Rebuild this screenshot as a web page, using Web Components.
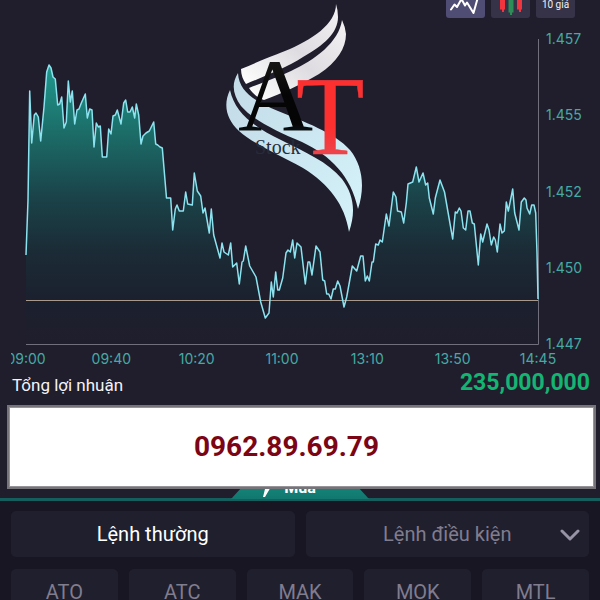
<!DOCTYPE html>
<html lang="vi">
<head>
<meta charset="utf-8">
<meta name="viewport" content="width=device-width, initial-scale=1">
<title>AT Stock</title>
<style>
  html, body { margin: 0; height: 100%; background: #201e2d; }
  body { overflow: hidden; font-family: Roboto, "Noto Sans", sans-serif; color: #f4f4f8; }
</style>
</head>
<body>
<trading-screen></trading-screen>
<script>
const define = (name, html, setup) => customElements.define(name, class extends HTMLElement {
  constructor() {
    super();
    const t = document.createElement('template');
    t.innerHTML = html;
    this.attachShadow({ mode: 'open' }).append(t.content.cloneNode(true));
  }
  connectedCallback() { if (setup) setup(this, this.shadowRoot); }
});

define('tool-button', `
  <style>
    :host { display: block; width: 39px; }
    button { display: flex; align-items: center; justify-content: center; width: 100%; height: 26px; padding: 0; border: 0; border-radius: 3px; background: #363348; color: #f0f0f5; font: 10px/12px Roboto, sans-serif; }
    :host([active]) button { background: #504d74; }
  </style>
  <button type="button"><slot></slot></button>`,
  (el, root) => { const l = el.getAttribute('label'); if (l) root.querySelector('button').setAttribute('aria-label', l); });

define('chart-toolbar', `
  <style>
    :host { display: flex; justify-content: flex-end; align-items: flex-end; gap: 6px; height: 18px; padding-right: 25px; overflow: hidden; }
    svg { display: block; }
  </style>
  <tool-button active label="Biểu đồ đường"><svg width="39" height="26" viewBox="0 -8 39 26" fill="none" stroke="#fff" stroke-width="2" stroke-linecap="round" stroke-linejoin="round"><path d="M5 9.500L8.500 4.500L11 7L15.500-1L19 5.500L21 2.500L27.500 13L32-3"/></svg></tool-button>
  <tool-button label="Biểu đồ nến"><svg width="39" height="26" viewBox="0 -8 39 26"><path fill="#f1353f" d="M9-5h5V9.500h-1V12h-2V9.500H9zM26-5h5V9.500h-1V12h-2V9.500h-2z"/><path fill="#2c8d57" d="M17.500 0h5v12.500h-1.500V15h-2v-2.500h-1.500z"/></svg></tool-button>
  <tool-button>10 giá</tool-button>`);

const PRICE_LINE = '26,255 28,200 29.700,91 31.700,143 34.300,115 36,113 38.300,117 40.700,141 44,107 46.700,72 49,65 51,68 53,77 55.300,79 57.700,105 59.700,104 61.700,97 64,128 66.300,122 68.300,81 70.300,102 72.300,91 74.700,124 77,110 79,109 81.300,103 85.300,94 87.300,118 89.700,109 92,110 94,147 96.300,123 98.300,127 100.300,126 102.300,157 106.700,157 108.700,129 111,134 113,116 115.300,115 117.300,110 121,124 123.700,103 125.700,100 127.700,112 130,112 132.300,107 134.700,118 136.300,104 138.700,115 141,144 143,136 146,133 149.300,131 153.700,122 155.700,144 157.700,145 160,147 162.300,148 166.500,198 170.700,198 172.700,230 175.300,209 177,205 179.300,211 183.300,211 185.700,192 187.700,204 192.300,205 194.300,173 197.300,191 200.700,196 203,213 205,208 209.300,233 211.300,209 213.700,235 220,258 222,243 224,252 228.300,255 230.700,243 232.700,267 236.700,263 239.300,284 242,262 243.300,261 245.700,246 249.700,266 256,277 260.700,302 265.300,318 269,313 271.300,282 273.300,297 275.700,272 277.700,290 279.300,290 282.700,278 286,253 288,250 290.300,252 292.700,240 294.700,258 297,243 301,247 305.300,284 308,262 309.700,262 312,275 316,246 320,252 322.700,280 324.700,281 326.700,294 328.700,294 331,299 333.300,289 335.300,289 337.700,281 340,286 344,307 346.700,297 352.300,266 356.700,271 360.700,256 363,256 365.300,281 367.300,276 369.300,281 372,262 373.300,262 375.700,244 378.300,245 380,240 382.300,242 386.300,214 389,226 393.300,192 396,197 397.500,211 401.300,212 403.700,223 406.300,203 408,184 412.700,182 416.300,167 419,182 423,173 425.700,185 427.700,183 429.300,198 433.300,214 435.300,198 440,180 444.500,192 452.700,239 455.300,212 457,213 459.300,208 461,211 463.300,228 465.700,230 468,211 470,211 472.300,223 474.300,224 478.300,265 480.700,234 482.700,242 487,224 489,230 491.300,245 493.700,237 495.300,240 497.300,252 500,224 502,233 504.300,231 506.300,202 508.300,211 512.700,189 514.700,213 519,230 521.300,202 524.300,198 526,200 527,208 529.700,214 531.700,205 534,205 535.700,213 537,253 538,299';

define('price-chart', `
  <style>
    :host { display: grid; grid-template-columns: 1fr 62px; padding-top: 21px; font: 14px/16px Inter, sans-serif; color: #45aaa4; }
    .plot { display: block; width: calc(100% - 26px); height: 305px; margin-left: 26px; overflow: visible; }
    .prices { display: flex; flex-direction: column; justify-content: space-between; padding-left: 8px; }
    .prices span { display: flex; align-items: center; height: 0; }
    .times { grid-column: 1 / -1; display: flex; justify-content: space-between; margin: 7px 0 0 11px; padding: 0 62px 0 15px; overflow: hidden; }
    .times span { display: flex; justify-content: center; width: 0; }
  </style>
  <svg class="plot" viewBox="26 39 512 305" preserveAspectRatio="none" role="img" aria-label="Biểu đồ giá">
    <defs><linearGradient id="area" gradientUnits="userSpaceOnUse" x1="0" y1="65" x2="0" y2="344">
      <stop offset="0" stop-color="#20998e"/><stop offset=".24" stop-color="#1c6d69"/><stop offset=".48" stop-color="#1a4248"/><stop offset=".66" stop-color="#1b2c37"/><stop offset=".85" stop-color="#1b202e"/><stop offset="1" stop-color="#201e2d"/>
    </linearGradient></defs>
    <polygon fill="url(#area)" points="26,344 ${PRICE_LINE} 538,344"/>
    <g fill="none">
      <path d="M26 344.500H538.500V39" stroke="#716f7b"/>
      <path d="M26 300.500H538" stroke="#a8998c"/>
      <polyline points="${PRICE_LINE}" stroke="#8be3ef" stroke-width="1.500" stroke-linejoin="round"/>
    </g>
  </svg>
  <div class="prices"><span>1.457</span><span>1.455</span><span>1.452</span><span>1.450</span><span>1.447</span></div>
  <div class="times"><span>09:00</span><span>09:40</span><span>10:20</span><span>11:00</span><span>13:10</span><span>13:50</span><span>14:45</span></div>`);

define('brand-logo', `
  <style>:host { display: block; } svg { display: block; width: 100%; } text { font-family: "Liberation Serif", serif; }</style>
  <svg viewBox="220 0 150 240">
    <defs>
      <linearGradient id="silver" x1="0" y1="1" x2="1" y2="0"><stop offset="0" stop-color="#fff"/><stop offset=".5" stop-color="#dedce0"/><stop offset="1" stop-color="#f4f2f4"/></linearGradient>
      <linearGradient id="ice" x1="0" y1="0" x2="1" y2="1"><stop offset="0" stop-color="#c3dbe7"/><stop offset="1" stop-color="#d4f2fa"/></linearGradient>
      <linearGradient id="ink" x1="0" y1="0" x2="0" y2="1"><stop offset="0" stop-color="#222320"/><stop offset=".5" stop-color="#050505"/><stop offset=".75" stop-color="#050505"/><stop offset="1" stop-color="#16333f"/></linearGradient>
      <linearGradient id="red" x1="0" y1="0" x2="0" y2="1"><stop offset=".6" stop-color="#fd3030"/><stop offset="1" stop-color="#dc5867"/></linearGradient>
    </defs>
    <path fill="url(#silver)" d="M336 4C336 24 312 40 285 51C267 58 255 63 241 69C241 75 243 80 246 84C265 76 286 68 303 57C324 45 338 33 338 17Q338 10 336 4Z"/>
    <path fill="url(#silver)" d="M342 20C339 42 315 60 291 71C278 77 262 83 249 88C253 94 258 98 264 100C281 94 302 84 319 74C337 62 346 48 346 34Q345 26 342 20Z"/>
    <path fill="url(#ice)" d="M238 73C231 84 233 95 241 106C253 120 276 131 302 142C331 156 351 176 358 209C365 188 363 166 350 150C334 132 304 122 278 111C257 102 239 93 238 73Z"/>
    <path fill="url(#ice)" d="M230 90C223 104 226 119 239 131C255 145 280 155 303 168C329 184 345 205 349 232C356 212 354 195 342 179C328 162 305 152 281 140C254 127 235 113 230 90Z"/>
    <text x="238" y="131" font-size="104" fill="url(#ink)">A</text>
    <text x="296" y="154" font-size="112" fill="url(#red)" stroke="#f23a40" stroke-width=".5">T</text>
    <text x="255" y="154" font-size="20" fill="#262d3b">Stock</text>
  </svg>`);

define('profit-row', `
  <style>
    :host { display: flex; justify-content: space-between; align-items: center; height: 31px; padding: 0 10px 0 12px; }
    span { font-size: 17px; line-height: 20px; margin-top: 4px; }
    strong { font-size: 23px; line-height: 28px; color: #14b573; }
  </style>
  <span>Tổng lợi nhuận</span><strong><slot></slot></strong>`);

define('contact-banner', `
  <style>
    :host { position: relative; z-index: 1; display: block; box-sizing: border-box; height: 84px; margin: 7px 4px 0 7px; padding-right: 30px; border: 2px solid #767379; outline: 1px solid #969399; outline-offset: -3px; background: #fff; color: #7b0514; font-size: 28px; font-weight: 700; line-height: 80px; text-align: center; }
  </style><slot></slot>`);

define('order-tab', `
  <style>
    :host { display: flex; justify-content: center; margin-top: -16px; border-bottom: 3px solid #145f5e; }
    button { display: flex; align-items: center; justify-content: center; gap: 12px; box-sizing: border-box; width: 138px; height: 26px; margin-bottom: -1px; padding: 4px 22px 0 0; border: 0; clip-path: polygon(24px 0, 114px 0, 100% 100%, 0 100%); background: linear-gradient(#159384, #12776f); color: #fff; font: 700 16px/20px Roboto, sans-serif; }
  </style>
  <button type="button"><svg width="10" height="18" viewBox="0 0 10 18" fill="#fff" aria-hidden="true"><path d="M3 0h6L6 6h4L3 18H1l2-8H0z"/></svg><slot></slot></button>`);

define('order-panel', `
  <style>
    :host { display: grid; grid-template-columns: repeat(10, 1fr); gap: 12px 11px; padding: 10px 11px 12px; background: #181622; }
    button, select { width: 100%; height: 46px; padding: 0; border: 0; border-radius: 5px; background: #201f2e; font: 20px/24px Roboto, sans-serif; text-align: center; color: #807d8e; }
    select { appearance: none; text-align-last: center; }
    .wide { grid-column: span 5; position: relative; }
    .small { grid-column: span 2; }
    .on { color: #fff; }
    svg { position: absolute; right: 9px; top: 16px; pointer-events: none; }
  </style>
  <div class="wide"><button type="button" class="on">Lệnh thường</button></div>
  <div class="wide"><select aria-label="Lệnh điều kiện"><option>Lệnh điều kiện</option></select>
    <svg width="20" height="16" viewBox="0 0 20 16" fill="none" stroke="#9794a6" stroke-width="3" stroke-linecap="round" stroke-linejoin="round"><path d="M2 4l8 8 8-8"/></svg></div>
  <button type="button" class="small">ATO</button>
  <button type="button" class="small">ATC</button>
  <button type="button" class="small">MAK</button>
  <button type="button" class="small">MOK</button>
  <button type="button" class="small">MTL</button>`);

define('trading-screen', `
  <style>
    :host { display: block; position: relative; }
    brand-logo { position: absolute; top: 0; left: calc(50% - 80px); width: 150px; }
  </style>
  <chart-toolbar></chart-toolbar>
  <price-chart></price-chart>
  <profit-row>235,000,000</profit-row>
  <contact-banner>0962.89.69.79</contact-banner>
  <order-tab>Mua</order-tab>
  <order-panel></order-panel>
  <brand-logo></brand-logo>`);
</script>
</body>
</html>
